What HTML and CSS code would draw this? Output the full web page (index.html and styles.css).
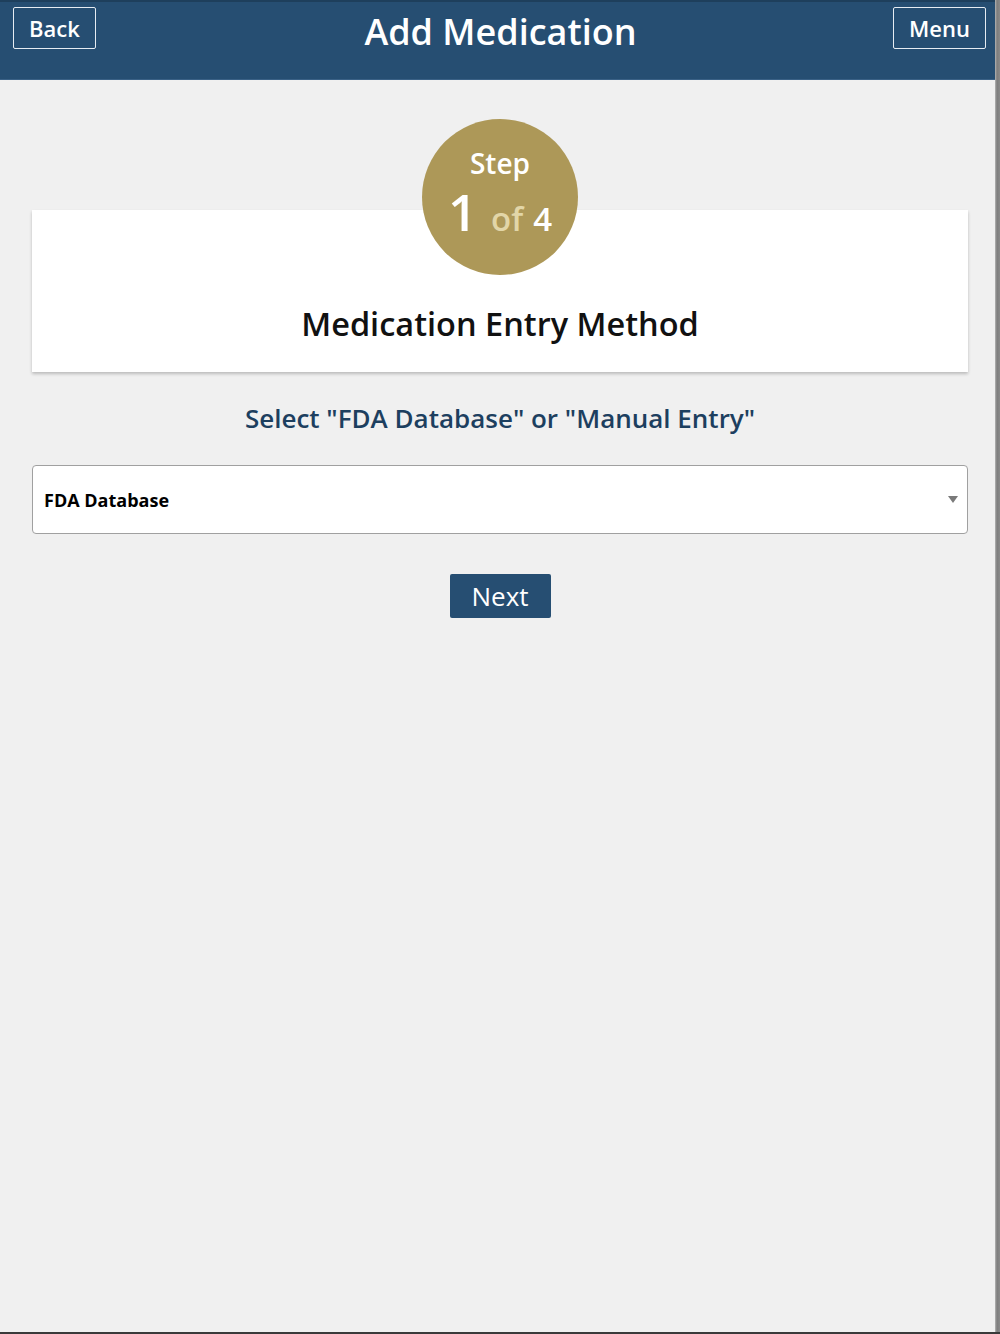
FILE: index.html
```html
<!DOCTYPE html>
<html lang="en">
<head>
    <meta charset="UTF-8">
    <meta name="viewport" content="width=device-width, initial-scale=1.0">
    <title>Add Medication</title>
    <link rel="stylesheet" href="styles.css">
</head>
<body>
    <div class="app">
        <div class="screen">
            <!-- Top bar -->
            <header class="topbar">
                <button class="bar-btn back">Back</button>
                <h1>Add Medication</h1>
                <button class="bar-btn menu">Menu</button>
            </header>

            <main class="content">
                <div class="step">
                    <span class="step-label">Step</span>
                    <span class="step-count"><span class="step-num">1</span><span class="step-of">of</span><span>4</span></span>
                </div>

                <div class="card">
                    <h2>Medication Entry Method</h2>
                </div>

                <p class="hint">Select "FDA Database" or "Manual Entry"</p>

                <div class="select">
                    <span>FDA Database</span>
                    <span class="caret"></span>
                </div>

                <button class="next-btn">Next</button>
            </main>
        </div>
        <div class="edge"></div>
    </div>
</body>
</html>
```

FILE: styles.css
```css
*{
    box-sizing: border-box;
    margin: 0;
    padding: 0;
}

body {
    font-family: "Open Sans", "Noto Sans", sans-serif;
    background: #f0f0f0;
    width: 1000px;
    height: 1334px;
    overflow: hidden;
}
.app {
    display: flex;
    height: 1334px;
    border-bottom: 2px solid #3a3a3a;
}
.screen {
    flex: 1;
    display: flex;
    flex-direction: column;
    background: #f0f0f0;
}
.edge {
    width: 5px;
    background: linear-gradient(to right, #b5b5b5, #7d7d7d 40%, #8a8a8a);
}
.topbar {
    height: 80px;
    background: #264e72;
    border-top: 2px solid #1e3f5c;
    border-bottom: 1px solid #3a6186;
    display: grid;
    grid-template-columns: 1fr auto 1fr;
    align-items: start;
    padding: 5px 9px 0 13px;
}
.topbar h1 {
    color: #fff;
    font-weight: 600;
    font-size: 36px;
    line-height: 50px;
    margin-left: 2px;
}
.bar-btn {
    background: transparent;
    color: #fff;
    border: 1.5px solid #e6ecf2;
    border-radius: 2px;
    font-family: inherit;
    font-size: 22px;
    font-weight: 600;
    height: 42px;
    padding: 0 15px;
}
.back {
    justify-self: start;
}
.menu {
    justify-self: end;
}
.content {
    display: flex;
    flex-direction: column;
    align-items: center;
    padding: 39px 27px 0 32px;
}
.step {
    width: 156px;
    height: 156px;
    border-radius: 50%;
    background: #ad9858;
    color: #fff;
    display: flex;
    flex-direction: column;
    align-items: center;
    margin-bottom: -65px;
    position: relative;
    z-index: 1;
}
.step-label {
    font-size: 28px;
    font-weight: 600;
    line-height: 38px;
    margin-top: 25px;
}
.step-count {
    display: flex;
    align-items: baseline;
    font-size: 33px;
    font-weight: 600;
    line-height: 50px;
    margin-top: 4px;
}
.step-num {
    font-size: 51px;
}
.step-of {
    color: #e2d6a8;
    margin: 0 10px 0 14px;
}
.card {
    width: 100%;
    background: #fff;
    box-shadow: 0 2px 3px rgba(0, 0, 0, 0.22);
    padding: 91px 0 25px;
    text-align: center;
}
.card h2 {
    font-size: 32.5px;
    font-weight: 600;
    line-height: 46px;
    color: #111;
}
.hint {
    margin-top: 27px;
    font-size: 26px;
    font-weight: 600;
    line-height: 38px;
    color: #1d3f5f;
}
.select {
    width: 100%;
    height: 69px;
    margin-top: 28px;
    background: #fff;
    border: 1px solid #a0a0a0;
    border-radius: 4px;
    display: flex;
    align-items: center;
    justify-content: space-between;
    padding: 0 9px 0 11px;
    font-size: 18px;
    font-weight: 700;
    color: #000;
}
.caret {
    width: 0;
    height: 0;
    border-left: 5px solid transparent;
    border-right: 5px solid transparent;
    border-top: 7px solid #7a7a7a;
}
.next-btn {
    margin-top: 40px;
    background: #264e72;
    color: #fff;
    border: none;
    border-radius: 2px;
    font-family: inherit;
    font-size: 26px;
    width: 101px;
    height: 44px;
}
```
